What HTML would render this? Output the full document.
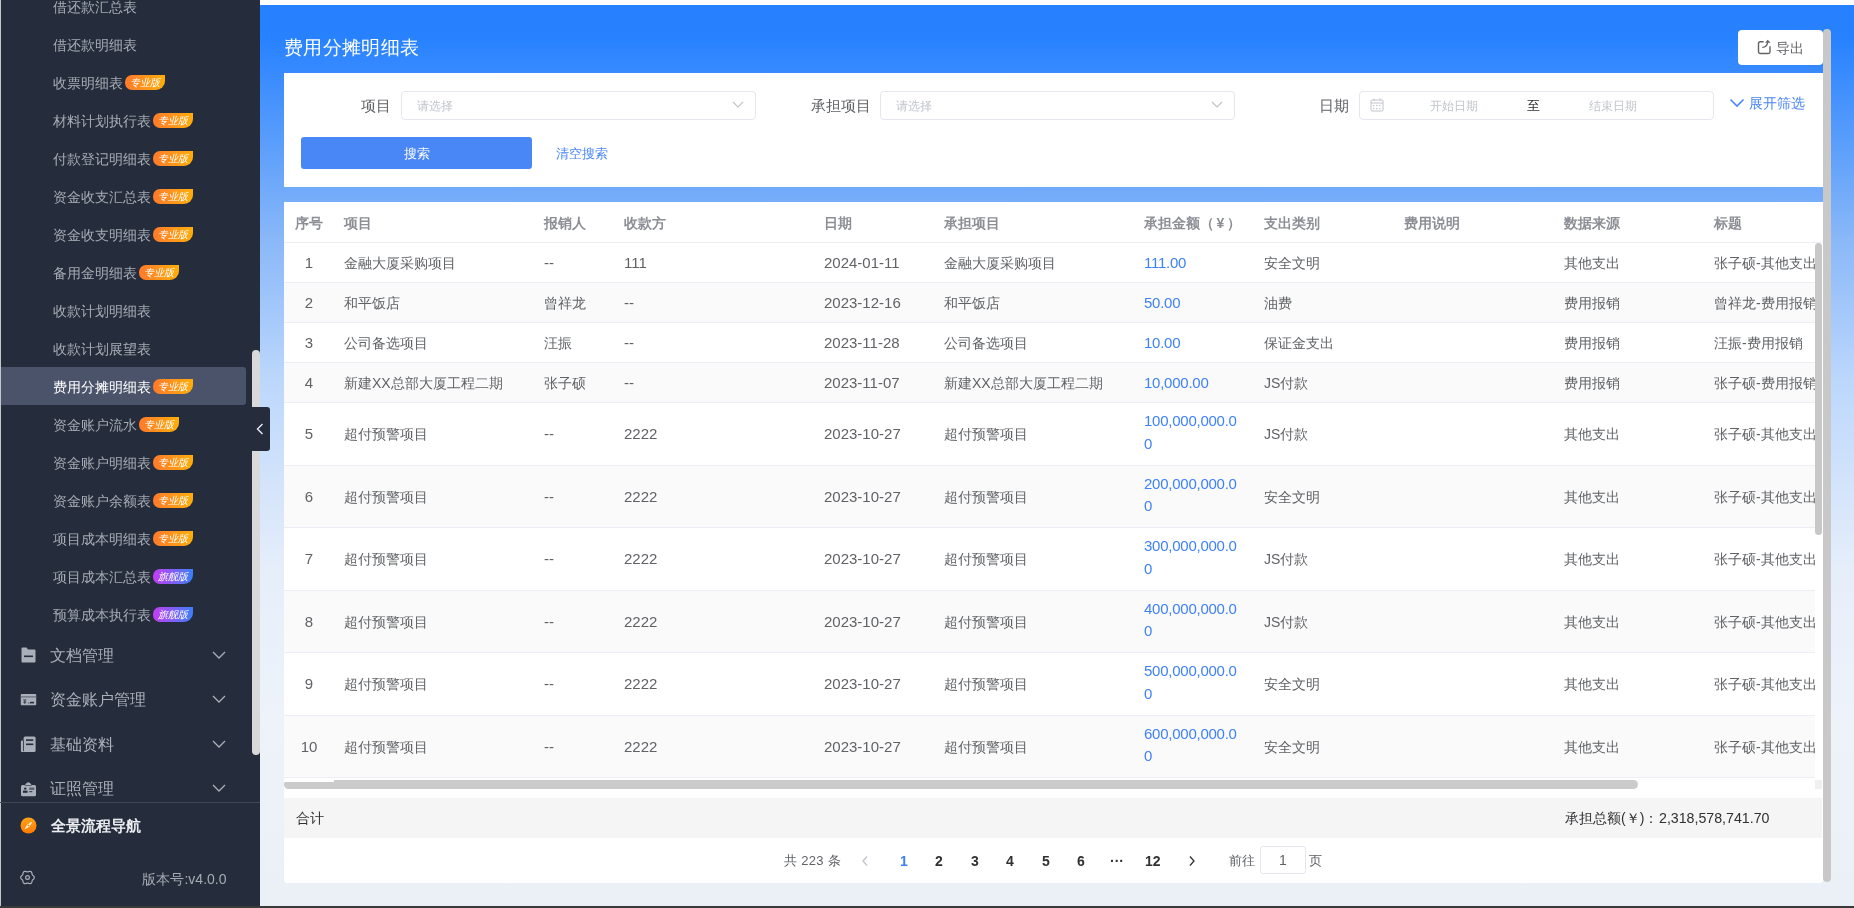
<!DOCTYPE html><html><head><meta charset="utf-8"><style>
*{box-sizing:border-box;margin:0;padding:0}
html,body{width:1854px;height:908px;overflow:hidden}
body{position:relative;font-family:"Liberation Sans",sans-serif;background:#eef2f9;color:#606266}
.a{position:absolute;white-space:nowrap}
#side{position:absolute;left:0;top:0;width:260px;height:908px;background:#252d3c;overflow:hidden}
#sideb{position:absolute;left:0;top:0;width:1px;height:908px;background:#c3c6cc}
.mi{position:absolute;left:52.7px;height:20px;line-height:20px;font-size:14px;color:#a6acb5}
.bd{display:inline-block;vertical-align:top;margin-top:2px;margin-left:2px;height:14.5px;width:40px;line-height:15px;font-size:10px;font-style:italic;color:#fff;text-align:center;border-radius:7px 0 9px 7px;background:linear-gradient(90deg,#ff7a2c,#ffae0a)}
.bd.p{background:linear-gradient(90deg,#c43df2,#3c80f8)}
.grp{position:absolute;left:50px;height:22px;line-height:22px;font-size:16px;color:#aab0b9}
.chev{position:absolute;left:212px}
#main{position:absolute;left:260px;top:0;width:1594px;height:908px;background:linear-gradient(180deg,#ffffff 0,#ffffff 5px,#2680ff 5px,#2882ff 40px,#8ab8f8 240px,#bcd7fc 380px,#e6eefa 570px,#eef3fa 720px,#ebf0f7 905px)}
.card{position:absolute;background:#fff}
.lbl{position:absolute;font-size:14.6px;color:#606266;height:20px;line-height:20px;width:100px;text-align:right}
.sel{position:absolute;height:29px;border:1px solid #e4e7ed;border-radius:4px;background:#fff}
.ph{position:absolute;font-size:12px;color:#c0c4cc;line-height:18px}
.th{position:absolute;top:1px;height:40px;line-height:41px;font-size:14px;font-weight:bold;color:#8b8e94}
.row{position:absolute;left:0;width:1531px;border-bottom:1px solid #ebeef5}
.td{position:absolute;font-size:14px;color:#606266;line-height:23px}
.num{font-size:15px;position:relative;top:-1px}
.amt{color:#3f82f7;letter-spacing:-0.25px}
</style></head><body><div id="root" style="position:absolute;left:0;top:0;width:1854px;height:908px;overflow:hidden;will-change:transform">
<div id="side"><div id="sideb"></div>
<div class="a" style="left:1px;top:367px;width:245px;height:38px;background:#4a536a;border-radius:0 3px 3px 0"></div>
<div class="mi" style="top:-3px">借还款汇总表</div>
<div class="mi" style="top:35px">借还款明细表</div>
<div class="mi" style="top:73px">收票明细表<span class="bd">专业版</span></div>
<div class="mi" style="top:111px">材料计划执行表<span class="bd">专业版</span></div>
<div class="mi" style="top:149px">付款登记明细表<span class="bd">专业版</span></div>
<div class="mi" style="top:187px">资金收支汇总表<span class="bd">专业版</span></div>
<div class="mi" style="top:225px">资金收支明细表<span class="bd">专业版</span></div>
<div class="mi" style="top:263px">备用金明细表<span class="bd">专业版</span></div>
<div class="mi" style="top:301px">收款计划明细表</div>
<div class="mi" style="top:339px">收款计划展望表</div>
<div class="mi" style="top:377px;color:#fff">费用分摊明细表<span class="bd">专业版</span></div>
<div class="mi" style="top:415px">资金账户流水<span class="bd">专业版</span></div>
<div class="mi" style="top:453px">资金账户明细表<span class="bd">专业版</span></div>
<div class="mi" style="top:491px">资金账户余额表<span class="bd">专业版</span></div>
<div class="mi" style="top:529px">项目成本明细表<span class="bd">专业版</span></div>
<div class="mi" style="top:567px">项目成本汇总表<span class="bd p">旗舰版</span></div>
<div class="mi" style="top:605px">预算成本执行表<span class="bd p">旗舰版</span></div>
<div class="grp" style="top:645px">文档管理</div>
<div class="chev a" style="top:651px;line-height:0"><svg width="14" height="8" viewBox="0 0 14 8"><path d="M1 1 L7 7 L13 1" fill="none" stroke="#aab0b9" stroke-width="1.3"/></svg></div>
<div class="grp" style="top:689px">资金账户管理</div>
<div class="chev a" style="top:695px;line-height:0"><svg width="14" height="8" viewBox="0 0 14 8"><path d="M1 1 L7 7 L13 1" fill="none" stroke="#aab0b9" stroke-width="1.3"/></svg></div>
<div class="grp" style="top:734px">基础资料</div>
<div class="chev a" style="top:740px;line-height:0"><svg width="14" height="8" viewBox="0 0 14 8"><path d="M1 1 L7 7 L13 1" fill="none" stroke="#aab0b9" stroke-width="1.3"/></svg></div>
<div class="grp" style="top:778px">证照管理</div>
<div class="chev a" style="top:784px;line-height:0"><svg width="14" height="8" viewBox="0 0 14 8"><path d="M1 1 L7 7 L13 1" fill="none" stroke="#aab0b9" stroke-width="1.3"/></svg></div>
<svg class="a" style="left:20px;top:647px" width="17" height="16" viewBox="0 0 17 16"><path d="M1.5 1.5 Q1.5 0.5 2.5 0.5 L6.5 0.5 L8 2.5 L14.5 2.5 Q15.5 2.5 15.5 3.5 L15.5 14.5 Q15.5 15.5 14.5 15.5 L2.5 15.5 Q1.5 15.5 1.5 14.5 Z" fill="#aab0b9"/><rect x="4" y="8.5" width="9" height="1.6" fill="#252d3c"/></svg>
<svg class="a" style="left:20px;top:694px" width="17" height="12" viewBox="0 0 17 12"><rect x="0.8" y="0" width="15.4" height="11.2" rx="0.8" fill="#aab0b9"/><rect x="0.8" y="2.4" width="15.4" height="1" fill="#5b6270"/><path d="M3.5 5 L4.8 6.6 L6.1 5 M3.4 7 H6.2 M3.4 8.4 H6.2 M4.8 6.6 V10" fill="none" stroke="#252d3c" stroke-width="0.7"/><rect x="10" y="7.8" width="4" height="1.6" fill="#252d3c"/><rect x="8" y="8.6" width="1.3" height="0.8" fill="#252d3c"/></svg>
<svg class="a" style="left:20px;top:736px" width="17" height="17" viewBox="0 0 17 17"><rect x="0.9" y="4.4" width="4" height="11.6" rx="1" fill="#aab0b9"/><rect x="3.6" y="0.6" width="12" height="15.4" rx="1.5" fill="#aab0b9"/><rect x="3.1" y="4.2" width="0.8" height="11" fill="#252d3c"/><rect x="6" y="3.3" width="7.3" height="1.6" fill="#252d3c"/><rect x="6" y="7.5" width="7.3" height="1.6" fill="#252d3c"/></svg>
<svg class="a" style="left:20px;top:780px" width="17" height="17" viewBox="0 0 17 17"><path d="M4.8 5.3 Q8.3 -0.6 11.8 5.3 Z" fill="#aab0b9"/><rect x="1" y="5" width="15" height="11.3" rx="1.5" fill="#aab0b9"/><rect x="4.8" y="5" width="7" height="0.7" fill="#3a4254"/><circle cx="5.2" cy="8.6" r="1.2" fill="#252d3c"/><rect x="3" y="10.6" width="4.6" height="2.2" fill="#252d3c"/><rect x="9.3" y="7.5" width="5" height="2.4" fill="#5b6270"/><rect x="9.3" y="11.2" width="3" height="1" fill="#252d3c"/></svg>
<div class="a" style="left:0;top:802px;width:260px;height:1px;background:#3e4658"></div>
<svg class="a" style="left:20px;top:817px" width="17" height="17" viewBox="0 0 17 17"><defs><linearGradient id="og" x1="0" y1="0" x2="0" y2="1"><stop offset="0" stop-color="#ffa31a"/><stop offset="1" stop-color="#ff7a00"/></linearGradient></defs><circle cx="8.5" cy="8.5" r="8" fill="url(#og)"/><path d="M12.5 4.5 L9.6 9.6 L4.5 12.5 L7.4 7.4 Z" fill="#fff"/><circle cx="8.5" cy="8.5" r="1.1" fill="#ff8a00"/></svg>
<div class="a" style="left:51px;top:815px;font-size:15px;line-height:22px;font-weight:bold;color:#eceef1">全景流程导航</div>
<svg class="a" style="left:20px;top:869.5px" width="15" height="15" viewBox="0 0 15 15"><path d="M14.30 7.50 L14.19 8.09 L13.90 8.63 L13.49 9.10 L13.04 9.52 L12.65 9.90 L12.35 10.30 L12.15 10.76 L12.02 11.29 L11.88 11.88 L11.68 12.48 L11.35 13.00 L10.90 13.39 L10.34 13.59 L9.72 13.61 L9.10 13.49 L8.52 13.31 L8.00 13.16 L7.50 13.10 L7.00 13.16 L6.48 13.31 L5.90 13.49 L5.28 13.61 L4.66 13.59 L4.10 13.39 L3.65 13.00 L3.32 12.48 L3.12 11.88 L2.98 11.29 L2.85 10.76 L2.65 10.30 L2.35 9.90 L1.96 9.52 L1.51 9.10 L1.10 8.63 L0.81 8.09 L0.70 7.50 L0.81 6.91 L1.10 6.37 L1.51 5.90 L1.96 5.48 L2.35 5.10 L2.65 4.70 L2.85 4.24 L2.98 3.71 L3.12 3.12 L3.32 2.52 L3.65 2.00 L4.10 1.61 L4.66 1.41 L5.28 1.39 L5.90 1.51 L6.48 1.69 L7.00 1.84 L7.50 1.90 L8.00 1.84 L8.52 1.69 L9.10 1.51 L9.72 1.39 L10.34 1.41 L10.90 1.61 L11.35 2.00 L11.68 2.52 L11.88 3.12 L12.02 3.71 L12.15 4.24 L12.35 4.70 L12.65 5.10 L13.04 5.48 L13.49 5.90 L13.90 6.37 L14.19 6.91 L14.30 7.50Z" fill="none" stroke="#aab0b9" stroke-width="1.2"/><circle cx="7.5" cy="7.5" r="1.9" fill="none" stroke="#aab0b9" stroke-width="1.2"/></svg>
<div class="a" style="right:33.5px;top:869px;font-size:14px;line-height:20px;color:#a6acb5">版本号:v4.0.0</div>
<div class="a" style="left:252px;top:350px;width:8px;height:405px;background:#d9d9d9;border-radius:4px"></div>
</div>
<div id="main"></div>
<div class="a" style="left:284px;top:36px;font-size:19px;letter-spacing:0.35px;line-height:24px;color:#fff">费用分摊明细表</div>
<div class="card" style="left:1738px;top:29.5px;width:85px;height:35.5px;border-radius:4px"></div>
<svg class="a" style="left:1757px;top:39px" width="16" height="17" viewBox="0 0 16 17"><path d="M6.6 2.7 L3.2 2.7 Q1.5 2.7 1.5 4.4 L1.5 12.8 Q1.5 14.5 3.2 14.5 L11.3 14.5 Q13 14.5 13 12.8 L13 7.3" fill="none" stroke="#606266" stroke-width="1.4"/><path d="M5.3 8.4 Q10 8 10.6 3.5" fill="none" stroke="#606266" stroke-width="1.4"/><path d="M8.1 3.7 L13.6 3.7 L10.7 0.8 Z" fill="#606266"/></svg>
<div class="a" style="left:1776px;top:38px;font-size:14px;line-height:20px;color:#606266">导出</div>
<div class="card" style="left:284px;top:73px;width:1539px;height:114px"></div>
<div class="lbl a" style="left:291px;top:95.5px">项目</div>
<div class="sel" style="left:401px;top:91px;width:355px"></div>
<div class="ph a" style="left:417px;top:97px">请选择</div>
<div class="a" style="left:732px;top:101px;line-height:0"><svg width="12" height="7" viewBox="0 0 12 7"><path d="M1 1 L6 6 L11 1" fill="none" stroke="#c0c4cc" stroke-width="1.2"/></svg></div>
<div class="lbl a" style="left:770.5px;top:95.5px">承担项目</div>
<div class="sel" style="left:880px;top:91px;width:355px"></div>
<div class="ph a" style="left:896px;top:97px">请选择</div>
<div class="a" style="left:1211px;top:101px;line-height:0"><svg width="12" height="7" viewBox="0 0 12 7"><path d="M1 1 L6 6 L11 1" fill="none" stroke="#c0c4cc" stroke-width="1.2"/></svg></div>
<div class="lbl a" style="left:1248.5px;top:95.5px">日期</div>
<div class="sel" style="left:1359px;top:91px;width:355px"></div>
<svg class="a" style="left:1370px;top:98px" width="14" height="14" viewBox="0 0 14 14"><rect x="1" y="2" width="12" height="11" rx="1" fill="none" stroke="#c0c4cc" stroke-width="1"/><line x1="1" y1="5" x2="13" y2="5" stroke="#c0c4cc"/><line x1="4" y1="0.5" x2="4" y2="3" stroke="#c0c4cc"/><line x1="10" y1="0.5" x2="10" y2="3" stroke="#c0c4cc"/><g fill="#c0c4cc"><rect x="3" y="7" width="1.4" height="1.2"/><rect x="6" y="7" width="1.4" height="1.2"/><rect x="9" y="7" width="1.4" height="1.2"/><rect x="3" y="10" width="1.4" height="1.2"/><rect x="6" y="10" width="1.4" height="1.2"/><rect x="9" y="10" width="1.4" height="1.2"/></g></svg>
<div class="ph a" style="left:1430px;top:97px">开始日期</div>
<div class="a" style="left:1527px;top:96px;font-size:13px;line-height:20px;color:#303133">至</div>
<div class="ph a" style="left:1589px;top:97px">结束日期</div>
<svg class="a" style="left:1729px;top:98px" width="16" height="10" viewBox="0 0 16 10"><path d="M1.5 1.5 L8 8 L14.5 1.5" fill="none" stroke="#4a86f7" stroke-width="1.6"/></svg>
<div class="a" style="left:1749px;top:93px;font-size:14px;line-height:20px;color:#4a86f7">展开筛选</div>
<div class="a" style="left:301px;top:137px;width:231px;height:32px;background:#4a87f6;border-radius:3px;color:#fff;font-size:13px;line-height:34px;text-align:center">搜索</div>
<div class="a" style="left:556px;top:144px;font-size:13px;line-height:20px;color:#4a86f7">清空搜索</div>
<div class="card" style="left:284px;top:202px;width:1539px;height:681px;border-radius:0 0 4px 4px;overflow:hidden">
<div class="a" style="left:0;top:0;width:1539px;height:41px;border-bottom:1px solid #ebeef5;background:#fff"></div>
<div class="th" style="left:0px;width:50px;text-align:center">序号</div>
<div class="th" style="left:60px">项目</div>
<div class="th" style="left:260px">报销人</div>
<div class="th" style="left:340px">收款方</div>
<div class="th" style="left:540px">日期</div>
<div class="th" style="left:660px">承担项目</div>
<div class="th" style="left:860px">承担金额（<span style="margin:0 2.5px">¥</span>）</div>
<div class="th" style="left:980px">支出类别</div>
<div class="th" style="left:1120px">费用说明</div>
<div class="th" style="left:1280px">数据来源</div>
<div class="th" style="left:1430px">标题</div>
<div class="row" style="top:41.00px;height:40.00px;background:#fff"></div>
<div class="td a" style="left:0;width:50px;text-align:center;top:50.00px"><span class="num">1</span></div>
<div class="td a" style="left:60px;top:50.00px;">金融大厦采购项目</div>
<div class="td a" style="left:260px;top:50.00px;"><span class="num">--</span></div>
<div class="td a" style="left:340px;top:50.00px;"><span class="num">111</span></div>
<div class="td a" style="left:540px;top:50.00px;"><span class="num">2024-01-11</span></div>
<div class="td a" style="left:660px;top:50.00px;">金融大厦采购项目</div>
<div class="td a" style="left:860px;top:50.00px;"><span class="num amt">111.00</span></div>
<div class="td a" style="left:980px;top:50.00px;">安全文明</div>
<div class="td a" style="left:1280px;top:50.00px;">其他支出</div>
<div class="td a" style="left:1430px;top:50.00px;">张子硕-其他支出</div>
<div class="row" style="top:81.00px;height:40.00px;background:#fafafa"></div>
<div class="td a" style="left:0;width:50px;text-align:center;top:90.00px"><span class="num">2</span></div>
<div class="td a" style="left:60px;top:90.00px;">和平饭店</div>
<div class="td a" style="left:260px;top:90.00px;">曾祥龙</div>
<div class="td a" style="left:340px;top:90.00px;"><span class="num">--</span></div>
<div class="td a" style="left:540px;top:90.00px;"><span class="num">2023-12-16</span></div>
<div class="td a" style="left:660px;top:90.00px;">和平饭店</div>
<div class="td a" style="left:860px;top:90.00px;"><span class="num amt">50.00</span></div>
<div class="td a" style="left:980px;top:90.00px;">油费</div>
<div class="td a" style="left:1280px;top:90.00px;">费用报销</div>
<div class="td a" style="left:1430px;top:90.00px;">曾祥龙-费用报销</div>
<div class="row" style="top:121.00px;height:40.00px;background:#fff"></div>
<div class="td a" style="left:0;width:50px;text-align:center;top:130.00px"><span class="num">3</span></div>
<div class="td a" style="left:60px;top:130.00px;">公司备选项目</div>
<div class="td a" style="left:260px;top:130.00px;">汪振</div>
<div class="td a" style="left:340px;top:130.00px;"><span class="num">--</span></div>
<div class="td a" style="left:540px;top:130.00px;"><span class="num">2023-11-28</span></div>
<div class="td a" style="left:660px;top:130.00px;">公司备选项目</div>
<div class="td a" style="left:860px;top:130.00px;"><span class="num amt">10.00</span></div>
<div class="td a" style="left:980px;top:130.00px;">保证金支出</div>
<div class="td a" style="left:1280px;top:130.00px;">费用报销</div>
<div class="td a" style="left:1430px;top:130.00px;">汪振-费用报销</div>
<div class="row" style="top:161.00px;height:40.00px;background:#fafafa"></div>
<div class="td a" style="left:0;width:50px;text-align:center;top:170.00px"><span class="num">4</span></div>
<div class="td a" style="left:60px;top:170.00px;">新建XX总部大厦工程二期</div>
<div class="td a" style="left:260px;top:170.00px;">张子硕</div>
<div class="td a" style="left:340px;top:170.00px;"><span class="num">--</span></div>
<div class="td a" style="left:540px;top:170.00px;"><span class="num">2023-11-07</span></div>
<div class="td a" style="left:660px;top:170.00px;">新建XX总部大厦工程二期</div>
<div class="td a" style="left:860px;top:170.00px;"><span class="num amt">10,000.00</span></div>
<div class="td a" style="left:980px;top:170.00px;">JS付款</div>
<div class="td a" style="left:1280px;top:170.00px;">费用报销</div>
<div class="td a" style="left:1430px;top:170.00px;">张子硕-费用报销</div>
<div class="row" style="top:201.00px;height:62.50px;background:#fff"></div>
<div class="td a" style="left:0;width:50px;text-align:center;top:221.25px"><span class="num">5</span></div>
<div class="td a" style="left:60px;top:221.25px;">超付预警项目</div>
<div class="td a" style="left:260px;top:221.25px;"><span class="num">--</span></div>
<div class="td a" style="left:340px;top:221.25px;"><span class="num">2222</span></div>
<div class="td a" style="left:540px;top:221.25px;"><span class="num">2023-10-27</span></div>
<div class="td a" style="left:660px;top:221.25px;">超付预警项目</div>
<div class="td a" style="left:860px;top:209.20px;line-height:22.5px"><span class="num amt">100,000,000.0</span><br><span class="num amt">0</span></div>
<div class="td a" style="left:980px;top:221.25px;">JS付款</div>
<div class="td a" style="left:1280px;top:221.25px;">其他支出</div>
<div class="td a" style="left:1430px;top:221.25px;">张子硕-其他支出</div>
<div class="row" style="top:263.50px;height:62.50px;background:#fafafa"></div>
<div class="td a" style="left:0;width:50px;text-align:center;top:283.75px"><span class="num">6</span></div>
<div class="td a" style="left:60px;top:283.75px;">超付预警项目</div>
<div class="td a" style="left:260px;top:283.75px;"><span class="num">--</span></div>
<div class="td a" style="left:340px;top:283.75px;"><span class="num">2222</span></div>
<div class="td a" style="left:540px;top:283.75px;"><span class="num">2023-10-27</span></div>
<div class="td a" style="left:660px;top:283.75px;">超付预警项目</div>
<div class="td a" style="left:860px;top:271.70px;line-height:22.5px"><span class="num amt">200,000,000.0</span><br><span class="num amt">0</span></div>
<div class="td a" style="left:980px;top:283.75px;">安全文明</div>
<div class="td a" style="left:1280px;top:283.75px;">其他支出</div>
<div class="td a" style="left:1430px;top:283.75px;">张子硕-其他支出</div>
<div class="row" style="top:326.00px;height:62.50px;background:#fff"></div>
<div class="td a" style="left:0;width:50px;text-align:center;top:346.25px"><span class="num">7</span></div>
<div class="td a" style="left:60px;top:346.25px;">超付预警项目</div>
<div class="td a" style="left:260px;top:346.25px;"><span class="num">--</span></div>
<div class="td a" style="left:340px;top:346.25px;"><span class="num">2222</span></div>
<div class="td a" style="left:540px;top:346.25px;"><span class="num">2023-10-27</span></div>
<div class="td a" style="left:660px;top:346.25px;">超付预警项目</div>
<div class="td a" style="left:860px;top:334.20px;line-height:22.5px"><span class="num amt">300,000,000.0</span><br><span class="num amt">0</span></div>
<div class="td a" style="left:980px;top:346.25px;">JS付款</div>
<div class="td a" style="left:1280px;top:346.25px;">其他支出</div>
<div class="td a" style="left:1430px;top:346.25px;">张子硕-其他支出</div>
<div class="row" style="top:388.50px;height:62.50px;background:#fafafa"></div>
<div class="td a" style="left:0;width:50px;text-align:center;top:408.75px"><span class="num">8</span></div>
<div class="td a" style="left:60px;top:408.75px;">超付预警项目</div>
<div class="td a" style="left:260px;top:408.75px;"><span class="num">--</span></div>
<div class="td a" style="left:340px;top:408.75px;"><span class="num">2222</span></div>
<div class="td a" style="left:540px;top:408.75px;"><span class="num">2023-10-27</span></div>
<div class="td a" style="left:660px;top:408.75px;">超付预警项目</div>
<div class="td a" style="left:860px;top:396.70px;line-height:22.5px"><span class="num amt">400,000,000.0</span><br><span class="num amt">0</span></div>
<div class="td a" style="left:980px;top:408.75px;">JS付款</div>
<div class="td a" style="left:1280px;top:408.75px;">其他支出</div>
<div class="td a" style="left:1430px;top:408.75px;">张子硕-其他支出</div>
<div class="row" style="top:451.00px;height:62.50px;background:#fff"></div>
<div class="td a" style="left:0;width:50px;text-align:center;top:471.25px"><span class="num">9</span></div>
<div class="td a" style="left:60px;top:471.25px;">超付预警项目</div>
<div class="td a" style="left:260px;top:471.25px;"><span class="num">--</span></div>
<div class="td a" style="left:340px;top:471.25px;"><span class="num">2222</span></div>
<div class="td a" style="left:540px;top:471.25px;"><span class="num">2023-10-27</span></div>
<div class="td a" style="left:660px;top:471.25px;">超付预警项目</div>
<div class="td a" style="left:860px;top:459.20px;line-height:22.5px"><span class="num amt">500,000,000.0</span><br><span class="num amt">0</span></div>
<div class="td a" style="left:980px;top:471.25px;">安全文明</div>
<div class="td a" style="left:1280px;top:471.25px;">其他支出</div>
<div class="td a" style="left:1430px;top:471.25px;">张子硕-其他支出</div>
<div class="row" style="top:513.50px;height:62.50px;background:#fafafa"></div>
<div class="td a" style="left:0;width:50px;text-align:center;top:533.75px"><span class="num">10</span></div>
<div class="td a" style="left:60px;top:533.75px;">超付预警项目</div>
<div class="td a" style="left:260px;top:533.75px;"><span class="num">--</span></div>
<div class="td a" style="left:340px;top:533.75px;"><span class="num">2222</span></div>
<div class="td a" style="left:540px;top:533.75px;"><span class="num">2023-10-27</span></div>
<div class="td a" style="left:660px;top:533.75px;">超付预警项目</div>
<div class="td a" style="left:860px;top:521.70px;line-height:22.5px"><span class="num amt">600,000,000.0</span><br><span class="num amt">0</span></div>
<div class="td a" style="left:980px;top:533.75px;">安全文明</div>
<div class="td a" style="left:1280px;top:533.75px;">其他支出</div>
<div class="td a" style="left:1430px;top:533.75px;">张子硕-其他支出</div>
<div class="a" style="left:1531px;top:41px;width:8px;height:640px;background:#fff"></div>
<div class="a" style="left:1531px;top:41px;width:7px;height:292px;background:#c8c8c8;border-radius:4px"></div>
<div class="a" style="left:0;top:578px;width:1531px;height:9px;background:#fff"></div>
<div class="a" style="left:0;top:578px;width:1354px;height:9px;background:#cbcbcb;border-radius:4.5px"></div>
<div class="a" style="left:0;top:576.5px;width:50px;height:3.5px;background:#fff"></div>
<div class="a" style="left:1531px;top:578px;width:7px;height:9px;background:#f0f0f0"></div>
<div class="a" style="left:0;top:596px;width:1538px;height:40px;background:#f5f5f5"></div>
<div class="a" style="left:12px;top:606px;font-size:14px;line-height:20px;color:#303133">合计</div>
<div class="a" style="left:1281px;top:606px;font-size:14px;line-height:20px;color:#303133">承担总额(￥)：</div>
<div class="a" style="left:1375px;top:605.5px;font-size:14.2px;line-height:20px;color:#303133">2,318,578,741.70</div>
<div class="a" style="left:500px;top:649px;font-size:13px;letter-spacing:0.3px;line-height:20px;color:#606266">共 223 条</div>
<svg class="a" style="left:577px;top:653px" width="8" height="12" viewBox="0 0 8 12"><path d="M6 1.5 L2 6 L6 10.5" fill="none" stroke="#c0c4cc" stroke-width="1.3"/></svg>
<div class="a" style="left:613px;top:649px;width:14px;text-align:center;font-size:14px;line-height:20px;font-weight:bold;color:#3f82f7">1</div>
<div class="a" style="left:648px;top:649px;width:14px;text-align:center;font-size:14px;line-height:20px;font-weight:bold;color:#303133">2</div>
<div class="a" style="left:684px;top:649px;width:14px;text-align:center;font-size:14px;line-height:20px;font-weight:bold;color:#303133">3</div>
<div class="a" style="left:719px;top:649px;width:14px;text-align:center;font-size:14px;line-height:20px;font-weight:bold;color:#303133">4</div>
<div class="a" style="left:755px;top:649px;width:14px;text-align:center;font-size:14px;line-height:20px;font-weight:bold;color:#303133">5</div>
<div class="a" style="left:790px;top:649px;width:14px;text-align:center;font-size:14px;line-height:20px;font-weight:bold;color:#303133">6</div>
<div class="a" style="left:861px;top:649px;width:14px;text-align:center;font-size:14px;line-height:20px;font-weight:bold;color:#303133">12</div>
<div class="a" style="left:826px;top:649px;font-size:14px;line-height:20px;font-weight:bold;color:#303133">···</div>
<svg class="a" style="left:904px;top:653px" width="8" height="12" viewBox="0 0 8 12"><path d="M2 1.5 L6 6 L2 10.5" fill="none" stroke="#303133" stroke-width="1.3"/></svg>
<div class="a" style="left:945px;top:649px;font-size:13px;line-height:20px;color:#606266">前往</div>
<div class="a" style="left:976px;top:644px;width:46px;height:28px;border:1px solid #e4e7ed;border-radius:3px;font-size:14px;line-height:26px;text-align:center;color:#606266">1</div>
<div class="a" style="left:1025px;top:649px;font-size:13px;line-height:20px;color:#606266">页</div>
</div>
<div class="a" style="left:1823px;top:29px;width:7.5px;height:853px;background:#c8c8c8;border-radius:4px"></div>
<div class="a" style="left:252px;top:407px;width:18px;height:44px;background:#252d3c;border-radius:0 3px 3px 0"></div>
<svg class="a" style="left:256px;top:423px" width="8" height="12" viewBox="0 0 8 12"><path d="M6.5 1 L1.5 6 L6.5 11" fill="none" stroke="#e8eaee" stroke-width="1.4"/></svg>
<div class="a" style="left:0;top:906px;width:1854px;height:2px;background:#3a3a3a"></div>
</div></body></html>
